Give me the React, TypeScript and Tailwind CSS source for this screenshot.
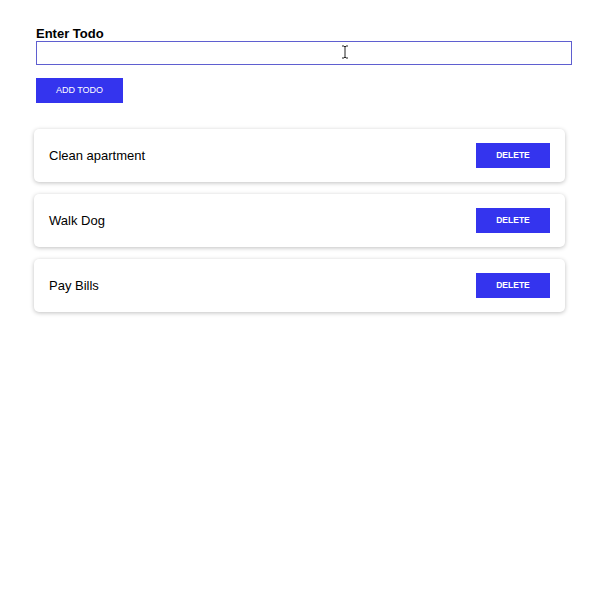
const todos = ["Clean apartment", "Walk Dog", "Pay Bills"];

const App = () => {
  return (
    <div
      className="min-h-[608px] bg-white pt-[26px] pl-[36px]"
      style={{ fontFamily: '"Liberation Sans", Arial, sans-serif' }}
    >
      {/* Form */}

      <div className="w-[536px]">
        <label className="block text-[13px] font-bold leading-[15px] text-black">
          Enter Todo
        </label>

        <div className="relative">
          <input
            type="text"
            className="block h-[24px] w-full border border-[#5f5fd0] bg-white outline-none"
          />

          <svg
            className="absolute left-[305px] top-[4px]"
            width="8"
            height="14"
            viewBox="0 0 8 14"
          >
            <path
              d="M1 1h2l1 1 1-1h2M4 2v10M1 13h2l1-1 1 1h2"
              fill="none"
              stroke="#222"
              strokeWidth="1"
            />
          </svg>
        </div>

        <button className="mt-[13px] h-[25px] w-[87px] bg-[#3434ee] text-[9px] text-white">
          ADD TODO
        </button>
      </div>

      {/* List */}

      <div className="ml-[-2px] mt-[26px] flex w-[531px] flex-col gap-[12px]">
        {todos.map((todo) => (
          <div
            key={todo}
            className="flex h-[53px] items-center justify-between rounded-[5px] bg-white pl-[15px] pr-[15px] shadow-[0_1px_4px_rgba(0,0,0,0.25)]"
          >
            <span className="text-[13px] text-black">{todo}</span>

            <button className="h-[25px] w-[74px] bg-[#3434ee] text-[8.5px] font-semibold text-white">
              DELETE
            </button>
          </div>
        ))}
      </div>
    </div>
  );
};

export default App;
